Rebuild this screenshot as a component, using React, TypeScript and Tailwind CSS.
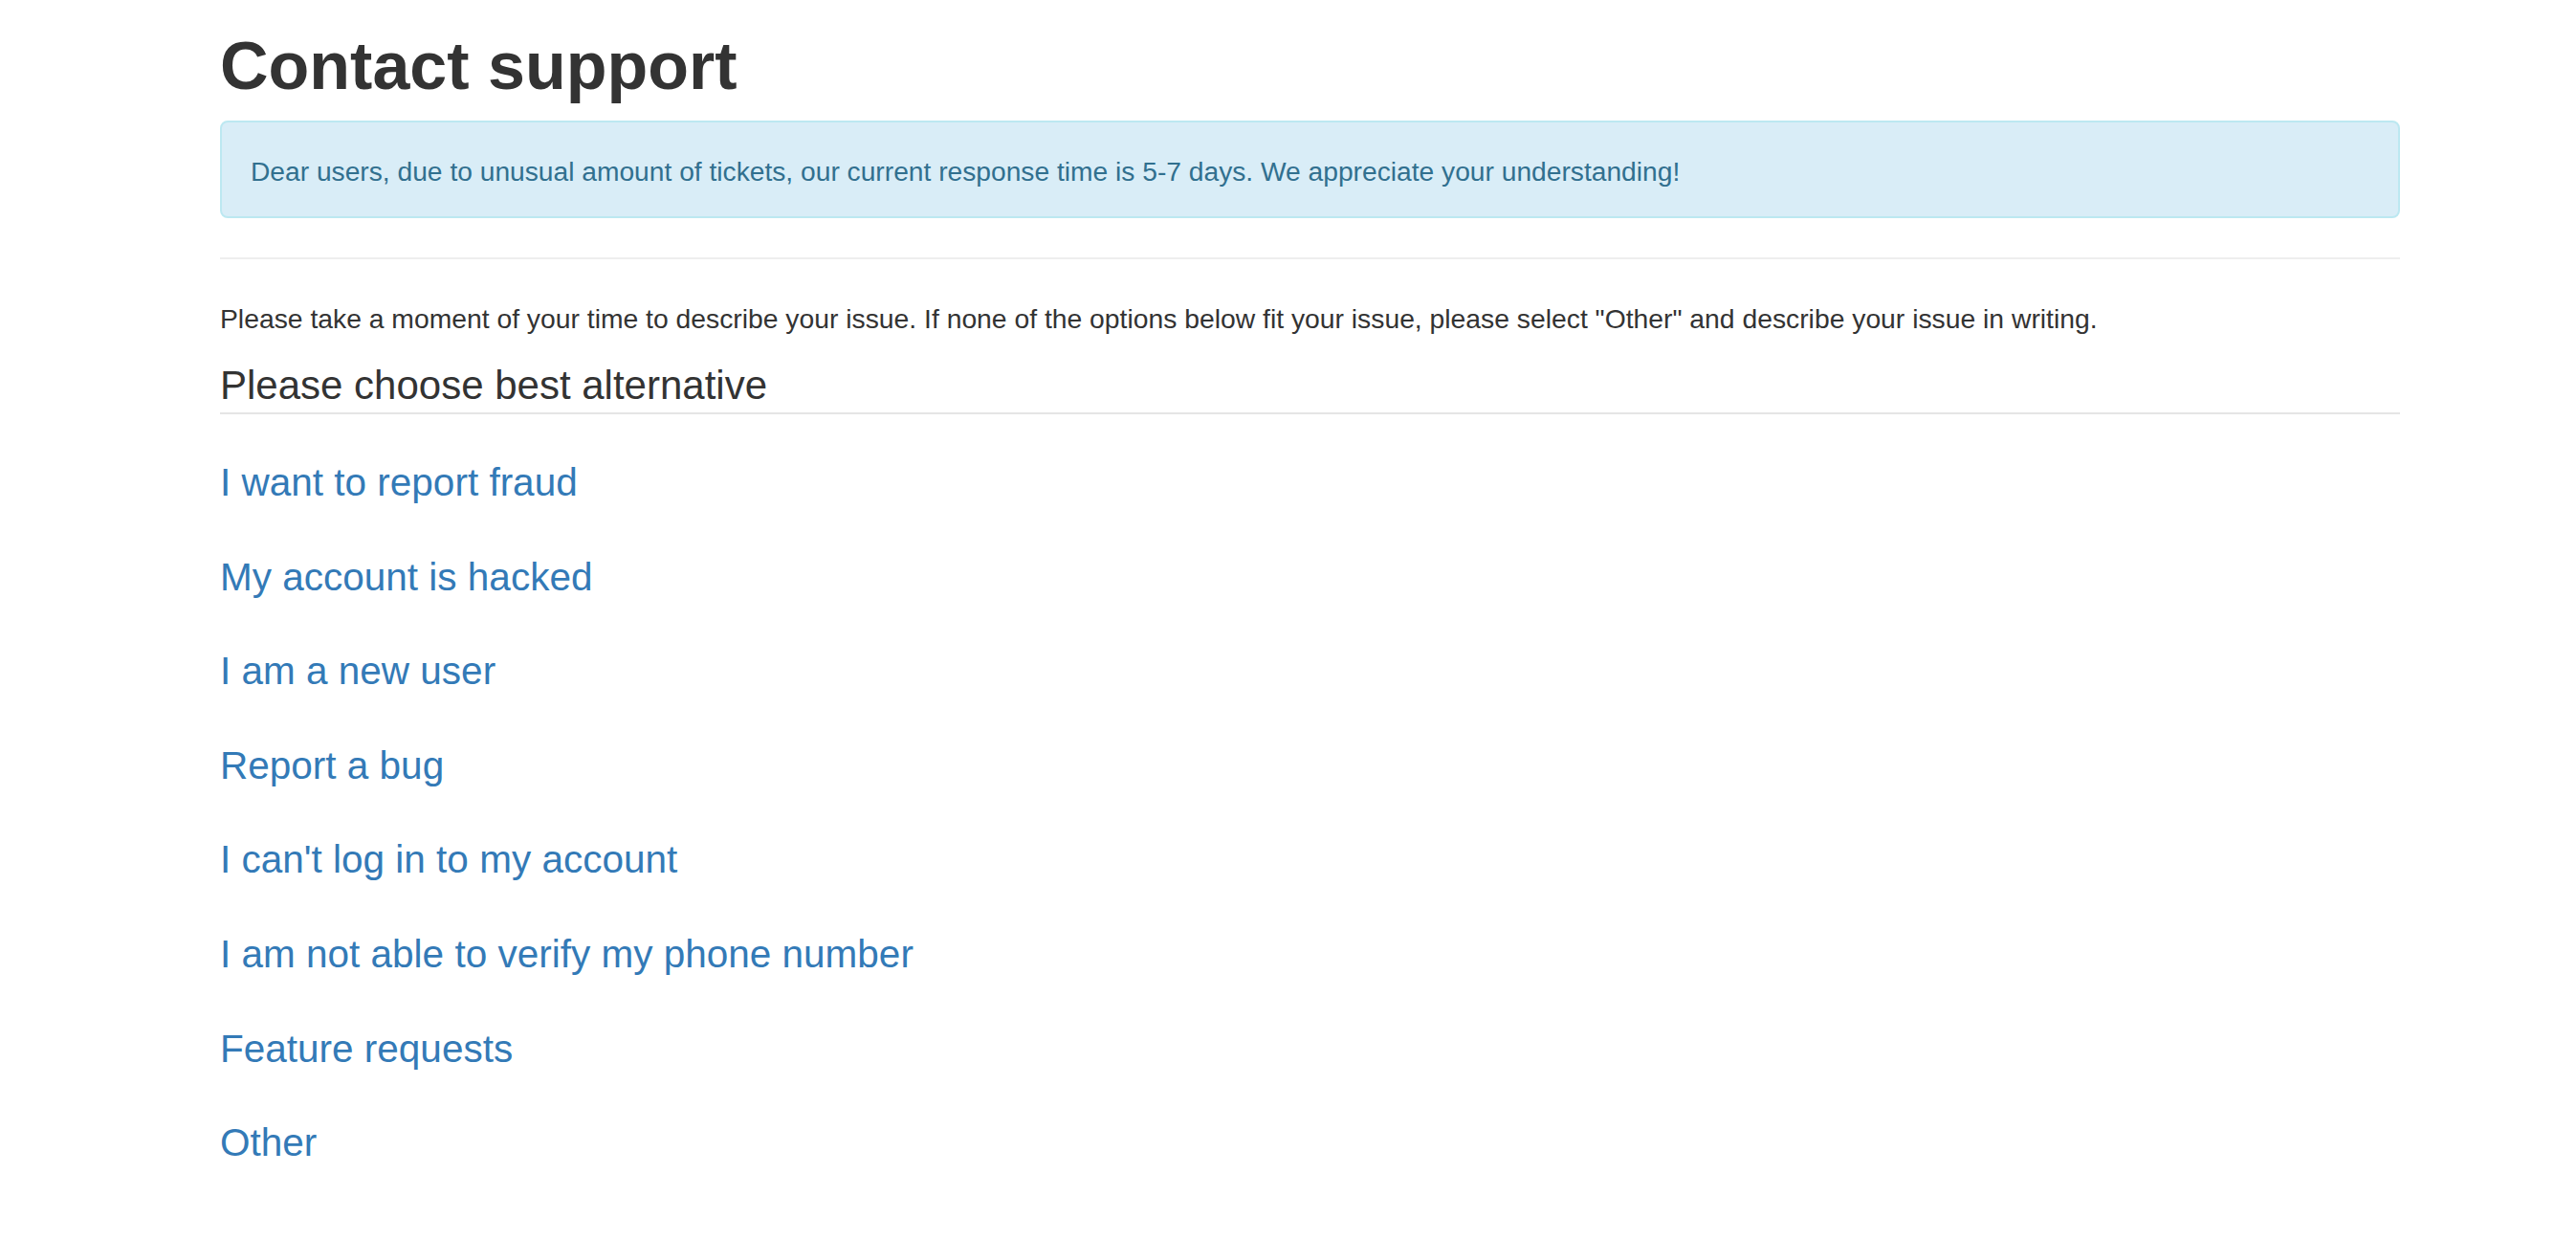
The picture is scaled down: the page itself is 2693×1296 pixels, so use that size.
const options = [
  "I want to report fraud",
  "My account is hacked",
  "I am a new user",
  "Report a bug",
  "I can't log in to my account",
  "I am not able to verify my phone number",
  "Feature requests",
  "Other",
];

export default function App() {
  return (
    <div className="min-h-[1296px] w-full bg-white font-['Liberation_Sans',Arial,sans-serif] text-[#333333]">
      <div className="ml-[230px] w-[2279px] pt-[31px]">
        <h1 className="text-[70px] font-bold leading-[77px] text-[#333333]">Contact support</h1>

        <div className="mt-[18px] rounded-[8px] border-2 border-[#bce8f1] bg-[#d9edf7] px-[30px] pt-[31px] pb-[27px] text-[28.2px] leading-[40px] text-[#31708f]">
          Dear users, due to unusual amount of tickets, our current response time is 5-7 days. We appreciate your understanding!
        </div>

        <hr className="mt-[41px] border-t-2 border-[#eeeeee]" />

        <p className="mt-[42px] text-[28.3px] leading-[40px]">
          Please take a moment of your time to describe your issue. If none of the options below fit your issue, please
          select "Other" and describe your issue in writing.
        </p>

        <h3 className="mt-[27px] border-b-2 border-[#e5e5e5] pb-[5px] text-[42px] leading-[46px]">
          Please choose best alternative
        </h3>

        <div className="mt-[48px] flex flex-col gap-[52.6px]">
          {options.map((label) => (
            <a key={label} href="#" className="block text-[40.5px] leading-[46px] text-[#337ab7]">
              {label}
            </a>
          ))}
        </div>
      </div>
    </div>
  );
}
